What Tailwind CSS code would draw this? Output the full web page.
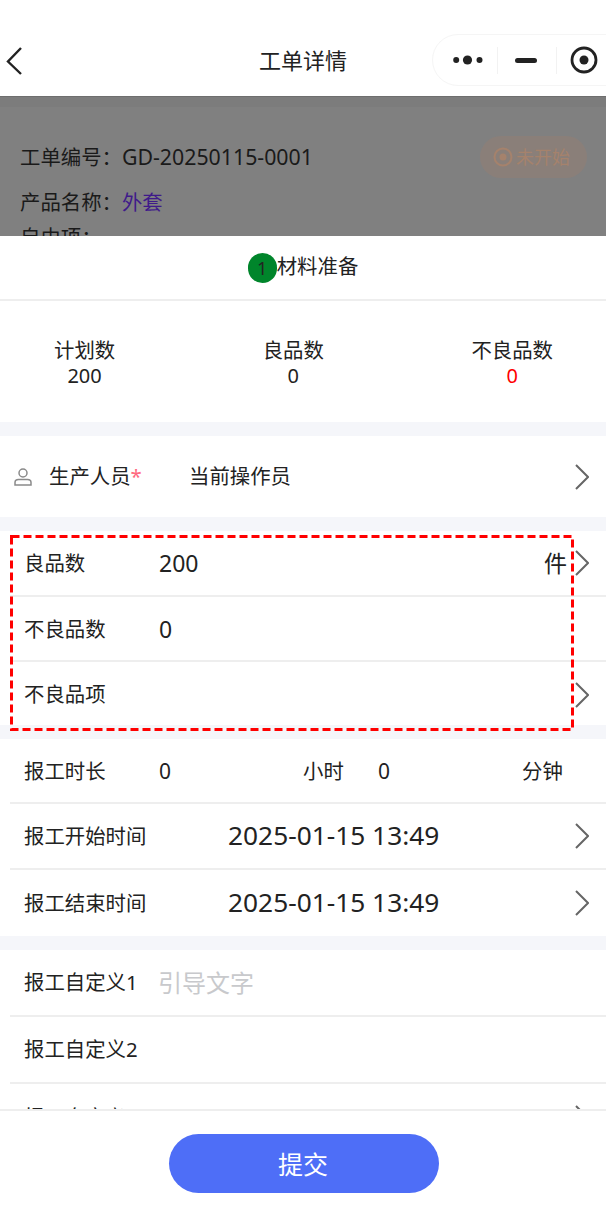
<!DOCTYPE html>
<html lang="zh-CN">
  <head>
    <meta charset="utf-8" />
    <title>工单详情</title>
    <script src="https://cdn.jsdelivr.net/npm/@tailwindcss/browser@4"></script>
  </head>
  <body class="bg-white">
    <div class="relative flex flex-col w-[606px] h-[1212px] overflow-hidden font-['Noto_Sans','Noto_Sans_CJK_SC',sans-serif] text-[#222] text-[20.4px]">

      <!-- nav -->
      <div class="relative shrink-0 h-[96px] flex items-end justify-center pb-[23px]">
        <svg class="absolute left-[6px] top-[46px]" width="18" height="30" viewBox="0 0 18 30" fill="none" stroke="#222" stroke-width="2.4"><path d="M15 2 2 15.5 15 28" /></svg>
        <span class="text-[22px] leading-[26px]">工单详情</span>
        <div class="absolute left-[432px] top-[34px] w-[200px] h-[52px] flex items-center rounded-full border border-[#f5f5f5] pl-[20px]">
          <svg width="30" height="14" viewBox="0 0 30 14" fill="#222"><circle cx="3.2" cy="7" r="3" /><circle cx="14.5" cy="7" r="4.6" /><circle cx="26.5" cy="7" r="3" /></svg>
          <div class="w-px h-[27px] bg-[#f2f2f2] ml-[14px]"></div>
          <div class="w-[22px] h-[5px] rounded-full bg-[#222] ml-[17px]"></div>
          <div class="w-px h-[27px] bg-[#f2f2f2] ml-[19px]"></div>
          <svg class="ml-[13px]" width="28" height="28" viewBox="0 0 28 28" fill="none"><circle cx="14" cy="14" r="12" stroke="#222" stroke-width="2.8" /><circle cx="14" cy="14" r="4.5" fill="#222" /></svg>
        </div>
      </div>

      <!-- dimmed header -->
      <div class="shrink-0 h-[140px] overflow-hidden bg-[#808080] border-t border-[#6e6e6e] shadow-[inset_0_10px_0_#7c7c7c] pl-[20px] pr-[19px] pt-[45px] text-[#1a1a1a]">
        <div class="flex items-center justify-between h-[30px]">
          <span>工单编号：<span class="text-[21.3px]">GD-20250115-0001</span></span>
          <span class="flex items-center gap-[3px] w-[107px] h-[42px] rounded-full bg-[#8a7f79] pl-[13px] text-[#a5826c] text-[18px]">
            <svg width="20" height="20" viewBox="0 0 20 20" fill="none"><circle cx="10" cy="10" r="8.5" stroke="#a5826c" stroke-width="2" /><circle cx="10" cy="10" r="3.5" fill="#a5826c" /></svg>
            未开始
          </span>
        </div>
        <div class="mt-[15px] leading-[30px]">产品名称：<span class="text-[#3f1a8a]">外套</span></div>
        <div class="mt-[5px] leading-[30px]">自由项：</div>
      </div>

      <!-- step -->
      <div class="shrink-0 h-[65px] flex items-center justify-center border-b-2 border-[#eeeeee]">
        <span class="flex items-center justify-center w-[29px] h-[30px] rounded-full bg-[#00852b] text-[18px] leading-none">1</span>
        <span class="-mt-[2px]">材料准备</span>
      </div>

      <!-- stats -->
      <div class="shrink-0 h-[121px] flex justify-between pl-[54px] pr-[53px] pt-[37px] text-center leading-[25px]">
        <div>计划数<div class="text-[20px]">200</div></div>
        <div>良品数<div class="text-[20px]">0</div></div>
        <div>不良品数<div class="text-[20px] text-[#ff0000]">0</div></div>
      </div>

      <div class="shrink-0 h-[14px] bg-[#f5f6fa]"></div>

      <!-- operator -->
      <div class="shrink-0 h-[81px] flex items-center pl-[14px] pr-[17px]">
        <svg width="18" height="18" viewBox="0 0 18 18" fill="none" stroke="#8a8a8a" stroke-width="1.5"><circle cx="9" cy="5" r="4" /><path d="M1 17v-2.5c0-2 1.5-3 3.5-3h9c2 0 3.5 1 3.5 3V17z" /></svg>
        <span class="ml-[17px] w-[140px]">生产人员<span class="text-[#ff6b81]">*</span></span>
        <span class="flex-1">当前操作员</span>
        <svg width="14" height="26" viewBox="0 0 14 26" fill="none" stroke="#666" stroke-width="2"><path d="M1 1l12 12L1 25" /></svg>
      </div>

      <div class="shrink-0 h-[14px] bg-[#f5f6fa]"></div>

      <!-- count rows -->
      <div class="shrink-0 pl-[10px]">
        <div class="h-[66px] flex items-center pl-[14px] pr-[17px] border-b-2 border-[#eeeeee]">
          <span class="w-[135px]">良品数</span>
          <span class="flex-1 text-[23px]">200</span>
          <span class="mr-[8px] text-[23px]">件</span>
          <svg width="14" height="26" viewBox="0 0 14 26" fill="none" stroke="#666" stroke-width="2"><path d="M1 1l12 12L1 25" /></svg>
        </div>
        <div class="h-[65px] flex items-center pl-[14px] pt-[2px] border-b-2 border-[#eeeeee]">
          <span class="w-[135px]">不良品数</span>
          <span class="text-[23px]">0</span>
        </div>
        <div class="h-[63px] flex items-center pl-[14px] pr-[17px] pt-[2px]">
          <span class="flex-1">不良品项</span>
          <svg width="14" height="26" viewBox="0 0 14 26" fill="none" stroke="#666" stroke-width="2"><path d="M1 1l12 12L1 25" /></svg>
        </div>
      </div>

      <div class="shrink-0 h-[14px] bg-[#f5f6fa]"></div>

      <!-- time rows -->
      <div class="shrink-0 pl-[10px]">
        <div class="h-[65px] flex items-center pl-[14px] pt-[2px] border-b-2 border-[#eeeeee]">
          <span class="w-[135px]">报工时长</span>
          <span class="w-[144px] text-[21px]">0</span>
          <span class="w-[75px]">小时</span>
          <span class="w-[144px] text-[21px]">0</span>
          <span>分钟</span>
        </div>
        <div class="h-[66px] flex items-center pl-[14px] pr-[17px] border-b-2 border-[#eeeeee]">
          <span class="w-[204px]">报工开始时间</span>
          <span class="flex-1 text-[26.3px]">2025-01-15 13:49</span>
          <svg width="14" height="26" viewBox="0 0 14 26" fill="none" stroke="#666" stroke-width="2"><path d="M1 1l12 12L1 25" /></svg>
        </div>
        <div class="h-[66px] flex items-center pl-[14px] pr-[17px]">
          <span class="w-[204px]">报工结束时间</span>
          <span class="flex-1 text-[26.3px]">2025-01-15 13:49</span>
          <svg width="14" height="26" viewBox="0 0 14 26" fill="none" stroke="#666" stroke-width="2"><path d="M1 1l12 12L1 25" /></svg>
        </div>
      </div>

      <div class="shrink-0 h-[14px] bg-[#f5f6fa]"></div>

      <!-- custom rows -->
      <div class="shrink-0 h-[159px] overflow-hidden pl-[10px]">
        <div class="h-[67px] flex items-center pl-[14px] border-b-2 border-[#eeeeee]">
          <span class="w-[134px]">报工自定义1</span>
          <span class="text-[24px] text-[#c8c9cc]">引导文字</span>
        </div>
        <div class="h-[67px] flex items-center pl-[14px] border-b-2 border-[#eeeeee]">
          <span>报工自定义2</span>
        </div>
        <div class="h-[67px] flex items-center pl-[14px] pr-[17px] justify-between">
          <span>报工自定义3</span>
          <svg width="14" height="26" viewBox="0 0 14 26" fill="none" stroke="#666" stroke-width="2"><path d="M1 1l12 12L1 25" /></svg>
        </div>
      </div>

      <!-- footer -->
      <div class="shrink-0 flex-1 flex justify-center border-t-2 border-[#eeeeee] pt-[23px]">
        <div class="flex items-center justify-center ml-[2px] pt-[3px] pr-[2px] w-[270px] h-[59px] rounded-full bg-[#4e6ef7] text-white text-[25px]">提交</div>
      </div>

      <!-- red annotation -->
      <svg class="absolute left-[10px] top-[535px]" width="564" height="196" fill="none" stroke="#ff0000" stroke-width="3" stroke-dasharray="8 4"><rect x="1.5" y="1.5" width="561" height="193" /></svg>
    </div>
  </body>
</html>
